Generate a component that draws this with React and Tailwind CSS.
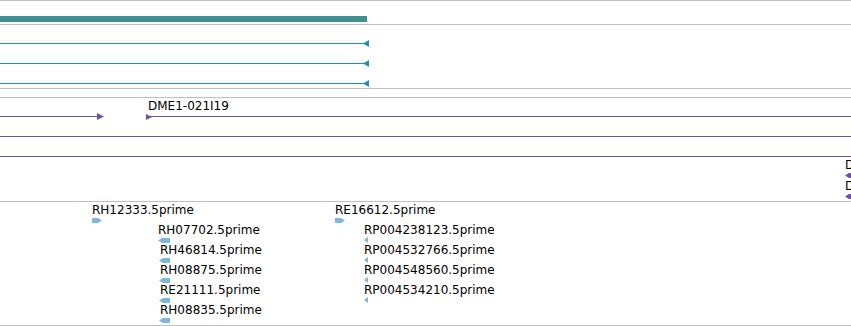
import React from 'react';

const font = { fontFamily: '"DejaVu Sans", sans-serif' };

const CYAN = '#1a93b2';
const PURPLE = '#6c51a6';
const LIGHT = '#7db8dc';

const Label = ({ className = '', children }) => (
  <div className={`h-[12px] whitespace-nowrap text-[12px] leading-[12px] text-black ${className}`}>
    {children}
  </div>
);

// block arrow for short features
const Arrow = ({ w, h = 5, dir, color, className = '' }) => {
  const pts =
    dir === 'right'
      ? `0,0 ${w - 4},0 ${w},${h / 2} ${w - 4},${h} 0,${h}`
      : `0,${h / 2} 4,0 ${w},0 ${w},${h} 4,${h}`;
  return (
    <svg className={`block shrink-0 ${className}`} width={w} height={h}>
      <polygon points={pts} fill={color} />
    </svg>
  );
};

const Tri = ({ w, h, dir, color, className = '' }) => (
  <svg className={`block shrink-0 ${className}`} width={w} height={h}>
    <polygon
      points={dir === 'right' ? `0,0 ${w},${h / 2} 0,${h}` : `${w},0 0,${h / 2} ${w},${h}`}
      fill={color}
    />
  </svg>
);

const leftEsts = [
  { name: 'RH07702.5prime', pad: 'pl-0', aw: 12 },
  { name: 'RH46814.5prime', pad: 'pl-[2px]', aw: 11 },
  { name: 'RH08875.5prime', pad: 'pl-[2px]', aw: 11 },
  { name: 'RE21111.5prime', pad: 'pl-[2px]', aw: 11 },
  { name: 'RH08835.5prime', pad: 'pl-[2px]', aw: 11 },
];

const rpEsts = ['RP004238123.5prime', 'RP004532766.5prime', 'RP004548560.5prime', 'RP004534210.5prime'];

export default function App() {
  return (
    <div className="w-[851px] h-[326px] overflow-hidden bg-white" style={font}>
      {/* gene span */}
      <div className="h-[24px] border-t border-[#c0c0c0] pt-[15px]">
        <div className="w-[367px] h-[6px] bg-[#418f91]" />
      </div>

      {/* transcripts */}
      <div className="h-[64px] border-t border-[#c0c0c0] pt-[15px] flex flex-col gap-[13px]">
        {[0, 1, 2].map((i) => (
          <div key={i} className="h-[7px] flex items-center">
            <div className="w-[364px] h-px bg-[#1a93b2]" />
            <Tri w={6} h={7} dir="left" color={CYAN} className="-ml-px" />
          </div>
        ))}
      </div>

      <div className="h-[9px] border-t border-[#c0c0c0]" />

      {/* clones */}
      <div className="h-[104px] border-t border-[#c0c0c0] pt-[2px] overflow-hidden">
        <Label className="pl-[148px]">DME1-021I19</Label>
        <div className="mt-px h-[7px] flex items-center">
          <div className="w-[98px] h-px bg-[#6c51a6]" />
          <Tri w={7} h={7} dir="right" color={PURPLE} className="-ml-px" />
          <div className="w-[42px]" />
          <Tri w={6} h={6} dir="right" color={PURPLE} />
          <div className="flex-1 h-px bg-[#6c51a6] -ml-[6px]" />
        </div>
        <div className="mt-[13px] h-[7px] flex items-center">
          <div className="flex-1 h-px bg-[#6c51a6]" />
        </div>
        <div className="mt-[13px] h-[7px] flex items-center">
          <div className="flex-1 h-px bg-[#6c51a6]" />
        </div>
        <div className="pl-[845px] flex flex-col">
          <Label className="-mt-px">DME1-012C05</Label>
          <Arrow w={8} dir="left" color={PURPLE} className="mt-[2px]" />
          <Label className="mt-[2px]">DME1-017F09</Label>
          <Arrow w={8} dir="left" color={PURPLE} className="mt-[2px]" />
        </div>
      </div>

      {/* ESTs */}
      <div className="h-[125px] border-y border-[#c0c0c0] pl-[92px] flex">
        <div className="w-[66px] pt-[2px] flex flex-col">
          <Label>RH12333.5prime</Label>
          <Arrow w={10} dir="right" color={LIGHT} className="mt-[2px]" />
        </div>
        <div className="w-[177px] pt-[22px] flex flex-col">
          {leftEsts.map((e) => (
            <div key={e.name} className="h-[20px] flex flex-col">
              <Label className={e.pad}>{e.name}</Label>
              <Arrow
                w={e.aw}
                dir="left"
                color={LIGHT}
                className={`mt-[2px] ${e.pad === 'pl-0' ? '' : 'ml-px'}`}
              />
            </div>
          ))}
        </div>
        <div className="w-[29px] pt-[2px] flex flex-col">
          <Label>RE16612.5prime</Label>
          <Arrow w={10} dir="right" color={LIGHT} className="mt-[2px]" />
        </div>
        <div className="pt-[22px] flex flex-col">
          {rpEsts.map((name) => (
            <div key={name} className="h-[20px] flex flex-col">
              <Label>{name}</Label>
              <Tri w={4} h={6} dir="left" color={LIGHT} className="mt-px" />
            </div>
          ))}
        </div>
      </div>
    </div>
  );
}
